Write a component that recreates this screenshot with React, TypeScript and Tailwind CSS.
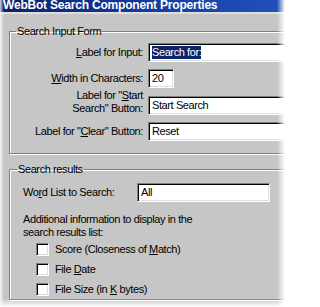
import React from "react"

const sunken =
  "bg-white border border-t-[#808080] border-l-[#808080] border-b-white border-r-white shadow-[inset_1px_1px_0_#000,inset_-1px_-1px_0_#dfdfdf]"

function Key({ children }: { children: React.ReactNode }) {
  return <span className="underline underline-offset-[1px]">{children}</span>
}

function Field({ value, selected, width }: { value: string; selected?: boolean; width?: string }) {
  return (
    <div className={`${sunken} h-[19px] flex items-center pl-[3px] ${width ?? "flex-1"}`}>
      <span className={selected ? "bg-[#0a246a] text-white leading-[13px]" : "leading-[13px]"}>{value}</span>
    </div>
  )
}

function Check({ children }: { children: React.ReactNode }) {
  return (
    <div className="h-[20px] flex items-center gap-[6px] ml-[13px]">
      <div className={`${sunken} w-[13px] h-[13px]`} />
      <span>{children}</span>
    </div>
  )
}

export default function App() {
  return (
    <div
      className="relative w-[285px] h-[307px] overflow-hidden bg-[#c6c6c6] text-black text-[11px] leading-[13px] tracking-[-0.4px]"
      style={{ fontFamily: '"Liberation Sans", Arial, sans-serif' }}
    >
      {/* Title bar, cut at the top */}
      <div className="h-[12px] overflow-hidden bg-gradient-to-r from-[#0a216c] via-[#143a9e] to-[#2252bc]">
        <div className="-mt-[2px] pl-[3px] h-[15px] flex items-center text-white font-bold text-[12px] tracking-[-0.2px] whitespace-nowrap">
          WebBot Search Component Properties
        </div>
      </div>
      <div className="h-[2px] bg-[#dedede]" />

      <div className="w-[320px] pl-[9px]">
        {/* Search Input Form */}
        <fieldset className="mt-[11px] border border-[#808080] shadow-[inset_1px_1px_0_#fff,1px_1px_0_#fff]">
          <legend className="ml-[6px] px-[1px]">Search Input Form</legend>
          <div className="flex flex-col pt-[5px] pb-[12px]">
            <div className="flex items-center">
              <div className="w-[138px] pr-[5px] text-right">
                <Key>L</Key>abel for Input:
              </div>
              <Field value="Search for:" selected />
            </div>
            <div className="flex items-center mt-[7px]">
              <div className="w-[138px] pr-[5px] text-right">
                <Key>W</Key>idth in Characters:
              </div>
              <Field value="20" width="w-[26px]" />
            </div>
            <div className="flex items-end">
              <div className="w-[138px] pr-[5px] pt-[1px] text-right">
                Label for "<Key>S</Key>tart
                <br />
                Search" Button:
              </div>
              <Field value="Start Search" />
            </div>
            <div className="flex items-center mt-[7px]">
              <div className="w-[138px] pr-[5px] text-right">
                Label for "<Key>C</Key>lear" Button:
              </div>
              <Field value="Reset" />
            </div>
          </div>
        </fieldset>

        {/* Search results */}
        <fieldset className="mt-[9px] border border-[#808080] shadow-[inset_1px_1px_0_#fff,1px_1px_0_#fff]">
          <legend className="ml-[7px] px-[1px]">Search results</legend>
          <div className="flex flex-col pt-[7px] pl-[13px]">
            <div className="flex items-center">
              <div className="w-[114px]">
                Wo<Key>r</Key>d List to Search:
              </div>
              <Field value="All" width="w-[133px]" />
            </div>
            <p className="mt-[11px]">
              Additional information to display in the
              <br />
              search results list:
            </p>
            <Check>
              Score (Closeness of <Key>M</Key>atch)
            </Check>
            <Check>
              File <Key>D</Key>ate
            </Check>
            <Check>
              File Size (in <Key>K</Key> bytes)
            </Check>
          </div>
        </fieldset>
      </div>

      {/* faded crop edges */}
      <div className="pointer-events-none absolute inset-y-0 left-0 w-[4px] bg-gradient-to-r from-white/80 to-transparent" />
      <div className="pointer-events-none absolute inset-y-0 right-0 w-[8px] bg-gradient-to-r from-transparent to-white" />
      <div className="pointer-events-none absolute inset-x-0 bottom-0 h-[8px] bg-gradient-to-b from-transparent to-white" />
    </div>
  )
}
